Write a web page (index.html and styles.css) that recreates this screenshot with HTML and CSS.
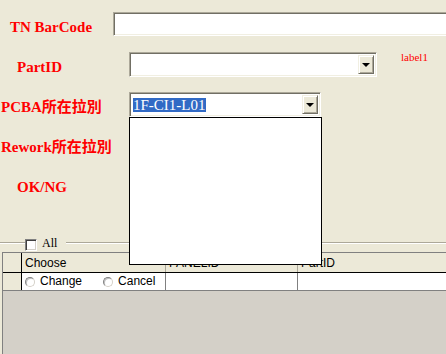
FILE: index.html
```html
<!DOCTYPE html>
<html lang="zh-Hant">
<head>
    <meta charset="UTF-8">
    <title>PCBA Rework</title>
    <link rel="stylesheet" href="styles.css">
</head>
<body>

<div class="form">
    <div class="row">
        <label class="lbl lbl-barcode">TN BarCode</label>
        <div class="textbox"></div>
    </div>

    <div class="row">
        <label class="lbl lbl-part">PartID</label>
        <div class="combo combo-part">
            <div class="combo-text"></div>
            <div class="combo-btn"><span class="arrow"></span></div>
        </div>
        <span class="label1">label1</span>
    </div>

    <div class="row">
        <label class="lbl lbl-line">PCBA所在拉別</label>
        <div class="combo combo-line">
            <div class="combo-text"><span class="selected">1F-CI1-L01</span></div>
            <div class="combo-btn"><span class="arrow"></span></div>
        </div>
    </div>

    <div class="row">
        <label class="lbl lbl-line">Rework所在拉別</label>
    </div>

    <div class="row">
        <label class="lbl lbl-part">OK/NG</label>
    </div>
</div>

<div class="group">
    <span class="group-line group-line-left"></span>
    <span class="checkbox"></span>
    <span class="check-text">All</span>
    <span class="group-line group-line-right"></span>
</div>

<div class="grid">
    <div class="grid-row grid-head">
        <div class="cell row-head"></div>
        <div class="cell">Choose</div>
        <div class="cell">PANELID</div>
        <div class="cell last">PartID</div>
    </div>
    <div class="grid-row grid-data">
        <div class="cell row-head"></div>
        <div class="cell choose">
            <span class="radio"></span><span class="radio-text">Change</span>
            <span class="radio radio-cancel"></span><span class="radio-text">Cancel</span>
        </div>
        <div class="cell"></div>
        <div class="cell last"></div>
    </div>
    <div class="grid-empty"></div>
</div>

<!-- open list of the PCBA combo -->
<div class="droplist"></div>

</body>
</html>
```

FILE: styles.css
```css
* {
    margin: 0;
    padding: 0;
    box-sizing: border-box;
}

html, body {
    width: 446px;
    height: 354px;
    overflow: hidden;
}

body {
    background: #ece9d8;
    font-family: 'Liberation Serif', 'Noto Sans CJK TC', serif;
    position: relative;
}

.form {
    padding-top: 12px;
}

.row {
    display: flex;
    align-items: flex-start;
    height: 40px;
}

.lbl {
    flex: none;
    color: #ff0000;
    font-weight: bold;
    font-size: 15px;
    line-height: 17px;
    padding-top: 7px;
    white-space: nowrap;
}

.lbl-barcode {
    width: 113px;
    padding-left: 10px;
}

.lbl-part {
    width: 129px;
    padding-left: 17px;
}

.lbl-line {
    width: 129px;
    padding-left: 1px;
}

/* runs on past the right edge of the window */
.textbox {
    flex: 1;
    height: 24px;
    background: #fff;
    border: 1px solid;
    border-right: 0;
    border-color: #aca899 #fff #fff #aca899;
    box-shadow: inset 1px 1px #716f64, inset 0 -1px #f1efe2;
}

.combo {
    flex: none;
    display: flex;
    height: 25px;
    padding: 2px;
    background: #fff;
    border: 1px solid;
    border-color: #aca899 #fff #fff #aca899;
    box-shadow: inset 1px 1px #716f64, inset -1px -1px #f1efe2;
}

.combo-part {
    width: 248px;
}

.combo-line {
    width: 192px;
}

.combo-text {
    flex: 1;
    padding: 1px 0 0 1px;
}

.selected {
    display: inline-block;
    height: 14px;
    line-height: 14px;
    font-size: 15px;
    color: #fff;
    background: #316ac5;
}

.combo-btn {
    flex: none;
    width: 16px;
    display: flex;
    align-items: center;
    justify-content: center;
    background: #ece9d8;
    border: 1px solid;
    border-color: #f1efe2 #716f64 #716f64 #f1efe2;
    box-shadow: inset 1px 1px #fff, inset -1px -1px #aca899;
}

.arrow {
    width: 0;
    height: 0;
    border-left: 4px solid transparent;
    border-right: 4px solid transparent;
    border-top: 4px solid #000;
    margin-top: 1px;
}

.label1 {
    margin-left: 24px;
    margin-top: -1px;
    color: #ff0000;
    font-size: 11px;
    line-height: 13px;
}

.group {
    display: flex;
    align-items: flex-start;
    height: 14px;
    margin-top: 26px;
}

.group-line {
    height: 2px;
    margin-top: 4px;
    border-top: 1px solid #aca899;
    border-bottom: 1px solid #fff;
}

.group-line-left {
    width: 25px;
}

.group-line-right {
    flex: 1;
    margin-left: 9px;
}

.checkbox {
    width: 12px;
    height: 12px;
    margin-top: 1px;
    background: #fff;
    border: 1px solid;
    border-color: #808080 #fff #fff #808080;
    box-shadow: inset 1px 1px #404040, inset -1px -1px #d4d0c8;
}

.check-text {
    margin-left: 5px;
    margin-top: -2px;
    font-size: 12px;
    line-height: 14px;
    color: #000;
}

.grid {
    margin-left: 2px;
    border-left: 1px solid #808080;
    border-top: 1px solid #808080;
    font-family: 'Liberation Sans', Arial, sans-serif;
    font-size: 12px;
    color: #000;
}

.grid-row {
    display: grid;
    grid-template-columns: 19px 144px 132px 1fr;
}

.grid-head {
    height: 20px;
    background: #ece9d8;
    border-bottom: 1px solid #000;
}

.grid-head .cell {
    padding: 2px 0 0 3px;
    line-height: 17px;
    border-right: 1px solid #aca899;
}

.grid-data {
    height: 18px;
    background: #fff;
    border-bottom: 1px solid #808080;
}

.grid-data .cell {
    line-height: 17px;
    border-right: 1px solid #808080;
}

.grid .row-head {
    background: #ece9d8;
    border-right: 1px solid #000;
}

.grid .last {
    border-right: 0;
}

.choose {
    display: flex;
    align-items: center;
    padding-left: 3px;
}

.radio {
    flex: none;
    width: 10px;
    height: 10px;
    border-radius: 50%;
    background: #fff;
    border: 1px solid;
    border-color: #808080 #d4d0c8 #d4d0c8 #808080;
    box-shadow: inset 1px 1px #c0c0c0;
}

.radio-text {
    margin-left: 5px;
}

.radio-cancel {
    margin-left: 21px;
}

.grid-empty {
    height: 80px;
    background: #d4d0c8;
}

.droplist {
    position: absolute;
    left: 129px;
    top: 117px;
    width: 193px;
    height: 148px;
    background: #fff;
    border: 1px solid #000;
}
```
